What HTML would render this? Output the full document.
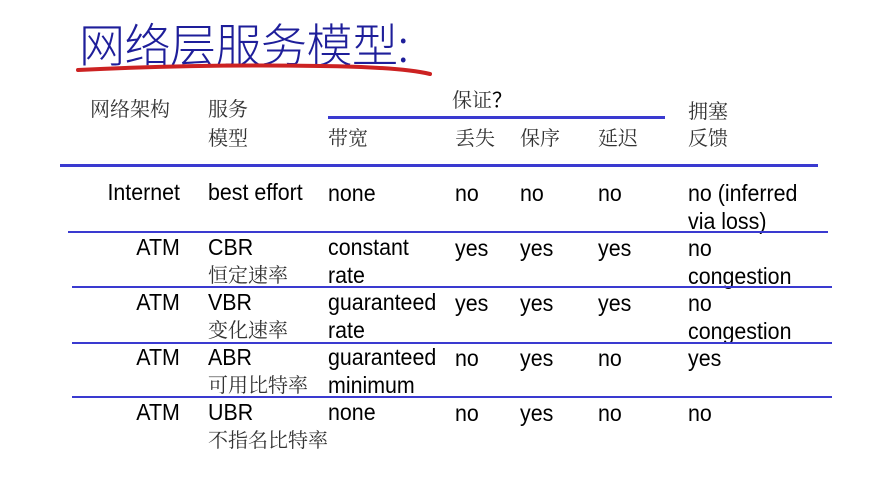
<!DOCTYPE html>
<html><head><meta charset="utf-8"><style>
body{margin:0;width:872px;height:480px;background:#fff;position:relative;overflow:hidden;font-family:"Liberation Sans","Noto Sans CJK SC",sans-serif}
.t{position:absolute;white-space:nowrap;font-size:23px;line-height:28px;color:#000;transform:scaleX(0.93);transform-origin:left top}
.r{transform-origin:right top;text-align:right}
.c{position:absolute;white-space:nowrap;font-size:20px;line-height:28px;color:#333;font-family:"Noto Serif CJK SC","Noto Sans CJK SC",sans-serif}
.l{position:absolute;height:2px;background:#3a3ad0}
</style></head><body>
<div style="position:absolute;left:79px;top:15px;font-size:46px;line-height:56px;color:#1e1e9a;font-family:'Noto Sans CJK SC',sans-serif;font-weight:300;letter-spacing:-0.5px">网络层服务模型:</div>
<svg style="position:absolute;left:0;top:0" width="872" height="100"><path d="M78 70 Q200 64 320 66 Q400 67 430 74" stroke="#cc2222" stroke-width="4" fill="none" stroke-linecap="round"/></svg>

<div class="c" style="left:90px;top:94px">网络架构</div>
<div class="c" style="left:208px;top:94px">服务</div>
<div class="c" style="left:208px;top:123px">模型</div>
<div class="c" style="left:452px;top:85px">保证<span style="font-family:'Liberation Sans';color:#000">？</span></div>
<div class="l" style="left:328px;top:116px;width:337px;height:3px"></div>
<div class="c" style="left:328px;top:123px">带宽</div>
<div class="c" style="left:455px;top:123px">丢失</div>
<div class="c" style="left:520px;top:123px">保序</div>
<div class="c" style="left:598px;top:123px">延迟</div>
<div class="c" style="left:688px;top:96px">拥塞</div>
<div class="c" style="left:688px;top:123px">反馈</div>
<div class="l" style="left:60px;top:164px;width:758px;height:3px"></div>

<div class="t r" style="right:692px;top:178px">Internet</div>
<div class="t" style="left:208px;top:178px">best effort</div>
<div class="t" style="left:328px;top:179px">none</div>
<div class="t" style="left:455px;top:179px">no</div>
<div class="t" style="left:520px;top:179px">no</div>
<div class="t" style="left:598px;top:179px">no</div>
<div class="t" style="left:688px;top:179px">no (inferred<br>via loss)</div>
<div class="l" style="left:68px;top:231px;width:760px"></div>

<div class="t r" style="right:692px;top:233px">ATM</div>
<div class="t" style="left:208px;top:233px">CBR</div>
<div class="c" style="left:208px;top:260px">恒定速率</div>
<div class="t" style="left:328px;top:233px">constant<br>rate</div>
<div class="t" style="left:455px;top:234px">yes</div>
<div class="t" style="left:520px;top:234px">yes</div>
<div class="t" style="left:598px;top:234px">yes</div>
<div class="t" style="left:688px;top:234px">no<br>congestion</div>
<div class="l" style="left:72px;top:286px;width:760px"></div>

<div class="t r" style="right:692px;top:288px">ATM</div>
<div class="t" style="left:208px;top:288px">VBR</div>
<div class="c" style="left:208px;top:315px">变化速率</div>
<div class="t" style="left:328px;top:288px">guaranteed<br>rate</div>
<div class="t" style="left:455px;top:289px">yes</div>
<div class="t" style="left:520px;top:289px">yes</div>
<div class="t" style="left:598px;top:289px">yes</div>
<div class="t" style="left:688px;top:289px">no<br>congestion</div>
<div class="l" style="left:72px;top:342px;width:760px"></div>

<div class="t r" style="right:692px;top:343px">ATM</div>
<div class="t" style="left:208px;top:343px">ABR</div>
<div class="c" style="left:208px;top:370px">可用比特率</div>
<div class="t" style="left:328px;top:343px">guaranteed<br>minimum</div>
<div class="t" style="left:455px;top:344px">no</div>
<div class="t" style="left:520px;top:344px">yes</div>
<div class="t" style="left:598px;top:344px">no</div>
<div class="t" style="left:688px;top:344px">yes</div>
<div class="l" style="left:72px;top:396px;width:760px"></div>

<div class="t r" style="right:692px;top:398px">ATM</div>
<div class="t" style="left:208px;top:398px">UBR</div>
<div class="c" style="left:208px;top:425px">不指名比特率</div>
<div class="t" style="left:328px;top:398px">none</div>
<div class="t" style="left:455px;top:399px">no</div>
<div class="t" style="left:520px;top:399px">yes</div>
<div class="t" style="left:598px;top:399px">no</div>
<div class="t" style="left:688px;top:399px">no</div>
</body></html>
